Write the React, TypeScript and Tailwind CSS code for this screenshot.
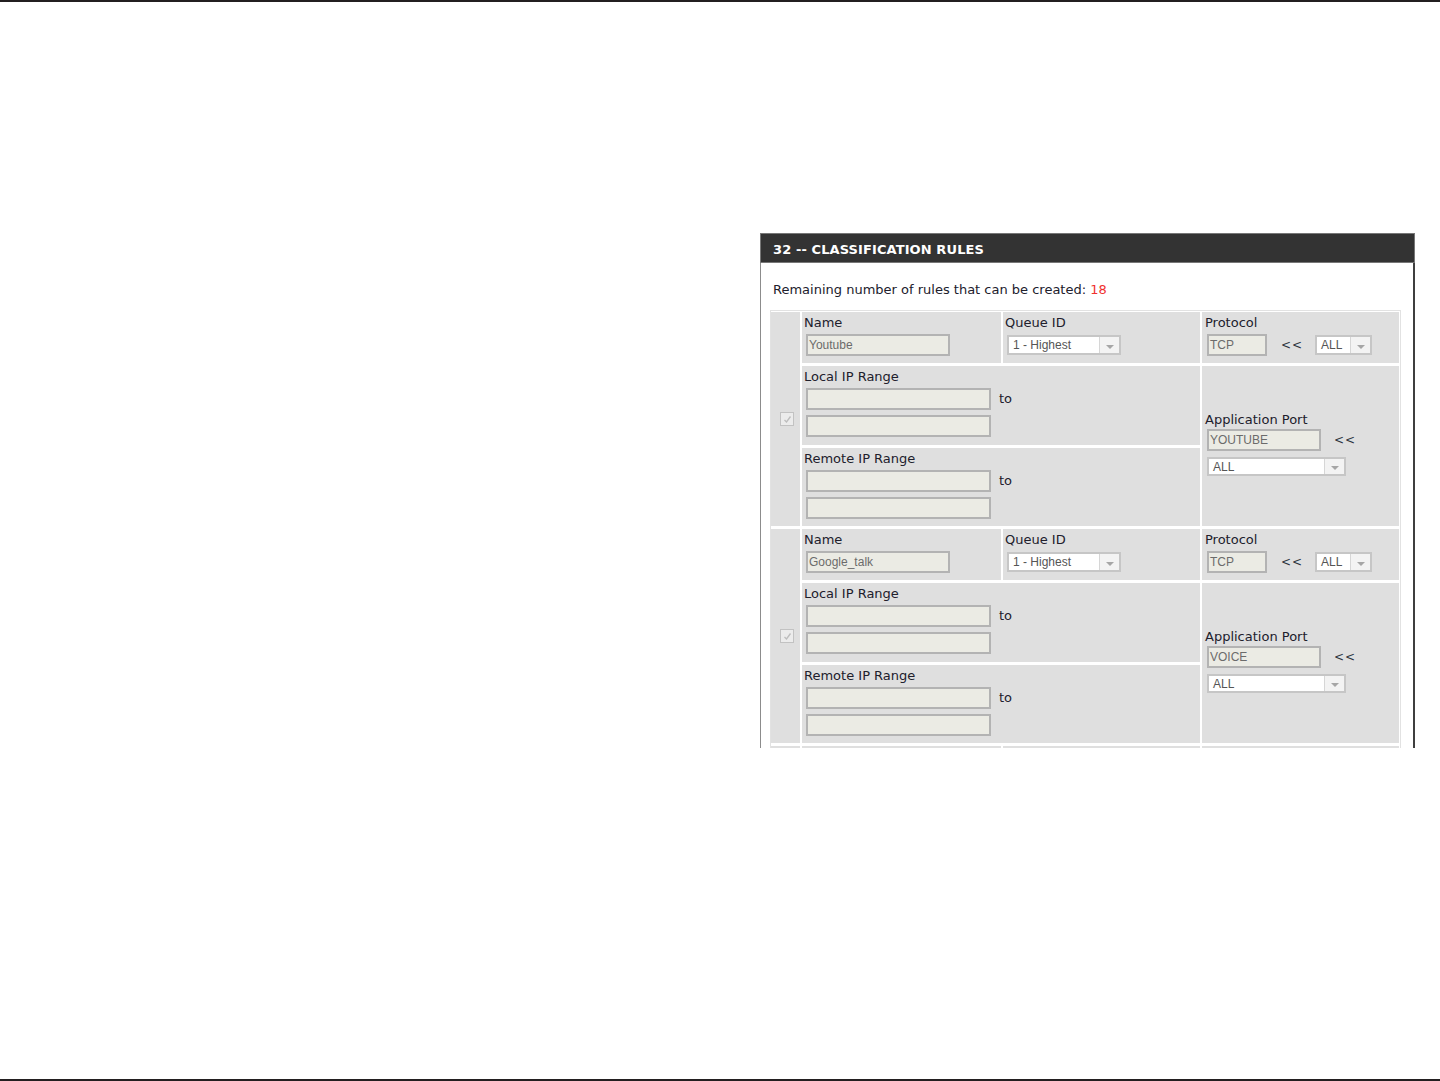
import React from 'react';

const sans = "font-['DejaVu_Sans',sans-serif]";
const field = "font-['Liberation_Sans',Arial,sans-serif]";

const TextBox: React.FC<{ value?: string; className: string }> = ({ value = '', className }) => (
  <div
    className={`${className} ${field} flex h-[22px] items-center border-2 border-[#b3b3b3] bg-[#ebebe4] px-[1px] text-[12px] text-[#6b6b6b]`}
  >
    {value}
  </div>
);

const Select: React.FC<{ value: string; className: string }> = ({ value, className }) => (
  <div className={`${className} ${field} flex items-stretch border-2 border-[#c6c6c6] bg-white text-[12px] text-[#555]`}>
    <span className="flex flex-1 items-center pl-[4px]">{value}</span>
    <span className="flex w-[20px] items-end justify-center border-l border-[#d6d6d6] bg-[#f3f3f3] pb-[4px]">
      <span className="h-0 w-0 border-x-[4px] border-t-[4px] border-x-transparent border-t-[#a6a6a6]" />
    </span>
  </div>
);

const Label: React.FC<{ children: React.ReactNode }> = ({ children }) => (
  <div className={`${sans} text-[13px] leading-[16px] text-[#21202c]`}>{children}</div>
);

const Arrows = ({ className }: { className: string }) => (
  <span className={`${className} ${sans} text-[12px] tracking-[1px] text-[#2b3440]`}>&lt;&lt;</span>
);

const Checkbox = () => (
  <div className="flex h-[14px] w-[14px] items-center justify-center border border-[#c2c2c2] bg-[#ececec]">
    <svg width="9" height="9" viewBox="0 0 9 9">
      <polyline points="1.5,5 3.5,7 7.5,1.5" fill="none" stroke="#bdbdbd" strokeWidth="1.3" />
    </svg>
  </div>
);

const IpRange: React.FC<{ title: string }> = ({ title }) => (
  <div className="col-span-2 bg-[#dfdfdf] px-[2px] pt-[3px]">
    <Label>{title}</Label>
    <div className="mt-[3px] ml-[2px] flex items-start">
      <div className="flex flex-col gap-[5px]">
        <TextBox className="w-[185px]" />
        <TextBox className="w-[185px]" />
      </div>
      <span className={`${sans} ml-[8px] text-[13px] leading-[22px] text-[#21202c]`}>to</span>
    </div>
  </div>
);

type Rule = { name: string; port: string };

const RuleBlock: React.FC<{ rule: Rule }> = ({ rule }) => (
  <div className="grid grid-cols-[29px_199px_197px_197px] grid-rows-[51px_79px_78px] gap-x-[2px] gap-y-[3px]">
    <div className="row-span-3 flex items-center justify-center bg-[#dfdfdf] pl-[3px]">
      <Checkbox />
    </div>
    <div className="bg-[#dfdfdf] px-[2px] pt-[3px]">
      <Label>Name</Label>
      <TextBox className="mt-[3px] ml-[2px] w-[144px]" value={rule.name} />
    </div>
    <div className="bg-[#dfdfdf] px-[2px] pt-[3px]">
      <Label>Queue ID</Label>
      <Select className="mt-[4px] ml-[2px] h-[20px] w-[114px]" value="1 - Highest" />
    </div>
    <div className="bg-[#dfdfdf] px-[3px] pt-[3px]">
      <Label>Protocol</Label>
      <div className="mt-[3px] ml-[2px] flex items-center">
        <TextBox className="w-[60px]" value="TCP" />
        <Arrows className="ml-[14px]" />
        <Select className="ml-[12px] h-[20px] w-[57px]" value="ALL" />
      </div>
    </div>
    <IpRange title="Local IP Range" />
    <div className="row-span-2 flex flex-col justify-center bg-[#dfdfdf] px-[3px] pb-[4px]">
      <Label>Application Port</Label>
      <div className="mt-[1px] ml-[2px] flex items-center">
        <TextBox className="w-[114px]" value={rule.port} />
        <Arrows className="ml-[13px]" />
      </div>
      <Select className="mt-[6px] ml-[2px] h-[19px] w-[139px]" value="ALL" />
    </div>
    <IpRange title="Remote IP Range" />
  </div>
);

const rules: Rule[] = [
  { name: 'Youtube', port: 'YOUTUBE' },
  { name: 'Google_talk', port: 'VOICE' },
];

export default function App() {
  return (
    <div className="flex h-[1081px] w-full flex-col bg-white">
      <div className="h-[2px] bg-[#231f20]" />
      <div className="flex-1 pl-[760px] pt-[231px]">
        <div className="h-[515px] w-[655px] overflow-hidden">
          <div className="flex h-[30px] items-center border border-[#777] bg-[#333] pl-[12px] pt-[3px]">
            <span className={`${sans} text-[13px] font-bold tracking-[0.1px] text-white`}>
              32 -- CLASSIFICATION RULES
            </span>
          </div>
          <div className="h-full border-l border-r-2 border-l-[#8c8c8c] border-r-[#3f3f3f] pl-[9px] pt-[19px]">
            <p className={`${sans} pl-[3px] text-[13px] leading-[16px] text-[#21202c]`}>
              Remaining number of rules that can be created: <span className="text-[#f0302e]">18</span>
            </p>
            <div className="mt-[12px] w-[631px] border border-[#e2e2e2] bg-white pt-[1px]">
              <div className="flex flex-col gap-[3px]">
                {rules.map((r) => (
                  <RuleBlock key={r.name} rule={r} />
                ))}
                {/* next rule continues below the cut */}
                <div className="grid h-[20px] grid-cols-[29px_199px_197px_197px] gap-x-[2px]">
                  <div className="bg-[#dfdfdf]" />
                  <div className="bg-[#dfdfdf]" />
                  <div className="bg-[#dfdfdf]" />
                  <div className="bg-[#dfdfdf]" />
                </div>
              </div>
            </div>
          </div>
        </div>
      </div>
      <div className="h-[2px] bg-[#231f20]" />
    </div>
  );
}
